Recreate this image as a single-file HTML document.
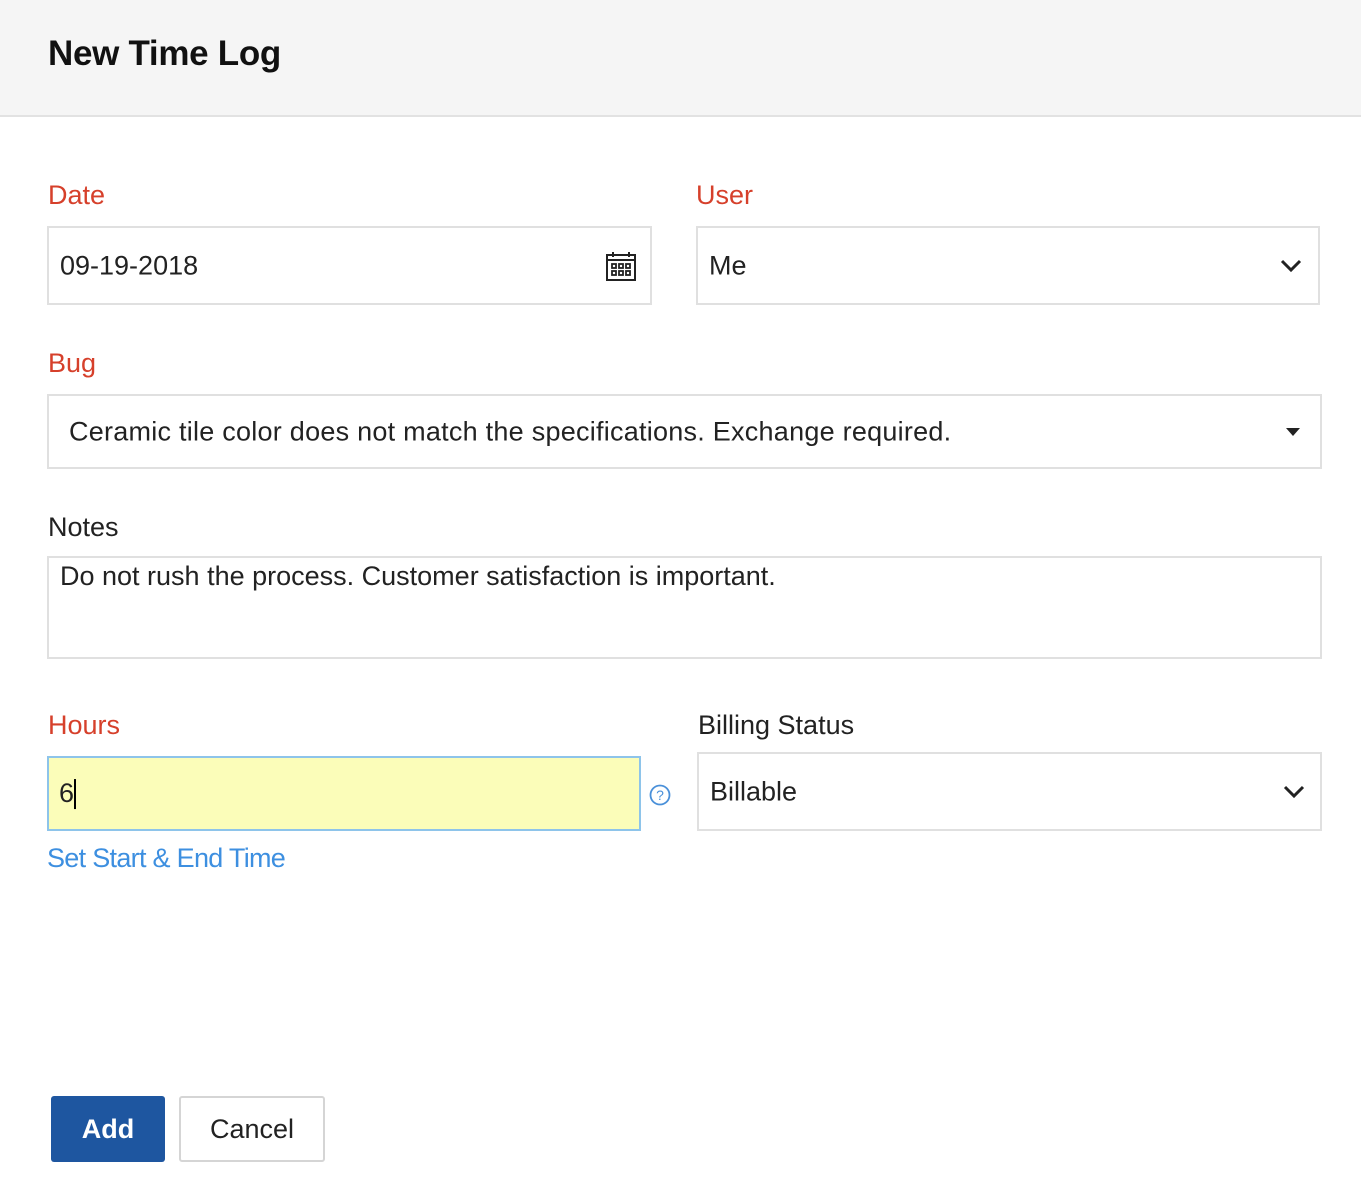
<!DOCTYPE html>
<html><head><meta charset="utf-8"><style>
*{box-sizing:border-box;margin:0;padding:0}
body{width:1361px;height:1193px;background:#fff;font-family:"Liberation Sans",sans-serif;position:relative;overflow:hidden;color:#222}
.hdr{position:absolute;left:0;top:0;width:1361px;height:117px;background:#f5f5f5;border-bottom:2px solid #e2e2e2}
.hdr h1{position:absolute;left:48px;top:34px;font-size:35px;font-weight:bold;color:#111;letter-spacing:-0.3px}
.lbl{position:absolute;font-size:27px}
.red{color:#d6402b}
.box{position:absolute;border:2px solid #e0e0e0;background:#fff;font-size:27px;color:#222}
.box span{position:absolute;top:50%;transform:translateY(-50%);white-space:nowrap}
.chev{position:absolute;top:50%;transform:translateY(-50%)}
</style></head><body>
<div class="hdr"><h1>New Time Log</h1></div>

<div class="lbl red" style="left:48px;top:180px">Date</div>
<div class="box" style="left:47px;top:226px;width:605px;height:79px"><span style="left:11px">09-19-2018</span>
<svg class="chev" style="left:556px" width="32" height="32" viewBox="0 0 32 32"><rect x="2" y="5" width="28" height="25" fill="none" stroke="#222" stroke-width="2"/><line x1="2" y1="10" x2="30" y2="10" stroke="#222" stroke-width="2"/><line x1="8" y1="2" x2="8" y2="7" stroke="#222" stroke-width="2"/><line x1="24" y1="2" x2="24" y2="7" stroke="#222" stroke-width="2"/>
<g fill="none" stroke="#222" stroke-width="1.8"><rect x="7" y="14" width="4" height="4"/><rect x="14" y="14" width="4" height="4"/><rect x="21" y="14" width="4" height="4"/><rect x="7" y="21" width="4" height="4"/><rect x="14" y="21" width="4" height="4"/><rect x="21" y="21" width="4" height="4"/></g></svg></div>

<div class="lbl red" style="left:696px;top:180px">User</div>
<div class="box" style="left:696px;top:226px;width:624px;height:79px"><span style="left:11px">Me</span>
<svg class="chev" style="left:582px" width="22" height="14" viewBox="0 0 22 14"><path d="M2 2 L11 11 L20 2" fill="none" stroke="#222" stroke-width="3"/></svg></div>

<div class="lbl red" style="left:48px;top:348px">Bug</div>
<div class="box" style="left:47px;top:394px;width:1275px;height:75px"><span style="left:20px;letter-spacing:0.25px">Ceramic tile color does not match the specifications. Exchange required.</span>
<svg class="chev" style="left:1236px" width="16" height="10" viewBox="0 0 16 10"><path d="M1 1 L15 1 L8 9Z" fill="#222"/></svg></div>

<div class="lbl" style="left:48px;top:512px">Notes</div>
<div class="box" style="left:47px;top:556px;width:1275px;height:103px"><span style="left:11px;top:3px;transform:none">Do not rush the process. Customer satisfaction is important.</span></div>

<div class="lbl red" style="left:48px;top:710px">Hours</div>
<div class="box" style="left:47px;top:756px;width:594px;height:75px;background:#fbfdb9;border-color:#8ec4ea"><span style="left:10px">6<span style="position:static;display:inline-block;width:2px;height:30px;background:#000;vertical-align:middle;transform:none"></span></span></div>
<svg style="position:absolute;left:649px;top:784px" width="22" height="22" viewBox="0 0 22 22"><circle cx="11" cy="11" r="9.5" fill="none" stroke="#4a90d9" stroke-width="1.8"/><text x="11" y="16" font-size="14" text-anchor="middle" fill="#4a90d9" font-family="Liberation Sans">?</text></svg>
<div class="lbl" style="left:47px;top:843px;color:#3d8fe0;letter-spacing:-0.7px">Set Start &amp; End Time</div>

<div class="lbl" style="left:698px;top:710px">Billing Status</div>
<div class="box" style="left:697px;top:752px;width:625px;height:79px"><span style="left:11px">Billable</span>
<svg class="chev" style="left:584px" width="22" height="14" viewBox="0 0 22 14"><path d="M2 2 L11 11 L20 2" fill="none" stroke="#222" stroke-width="3"/></svg></div>

<div style="position:absolute;left:51px;top:1096px;width:114px;height:66px;background:#1e56a0;border-radius:3px;color:#fff;font-size:27px;font-weight:bold;text-align:center;line-height:66px">Add</div>
<div style="position:absolute;left:179px;top:1096px;width:146px;height:66px;border:2px solid #d5d5d5;border-radius:3px;font-size:27px;text-align:center;line-height:62px;color:#222">Cancel</div>
</body></html>
